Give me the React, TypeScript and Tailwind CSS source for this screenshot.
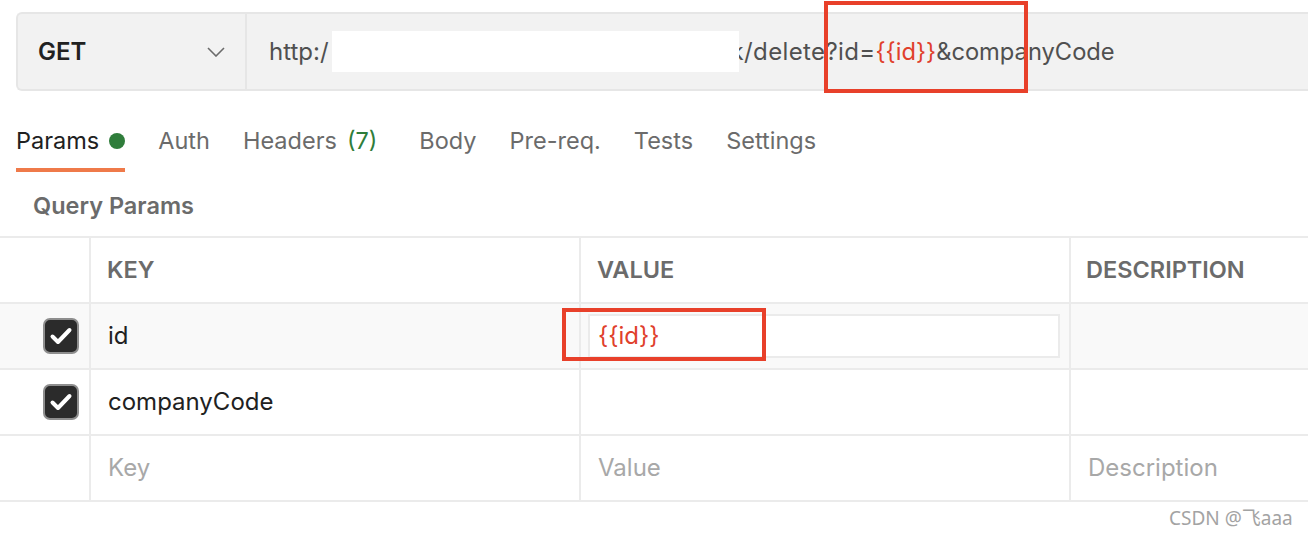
import React from "react";

const font = { fontFamily: "Inter, 'Noto Sans', sans-serif" };

function Checkbox() {
  return (
    <svg width="36" height="36" viewBox="0 0 36 36">
      <rect x="1" y="1" width="34" height="34" rx="6" fill="#2b2b2b" stroke="#8e8e8e" strokeWidth="2" />
      <path d="M9.5 18.5 L15 24 L26.5 12" fill="none" stroke="#ffffff" strokeWidth="4" strokeLinecap="round" strokeLinejoin="round" />
    </svg>
  );
}

const tabs = ["Auth", "Headers", "Body", "Pre-req.", "Tests", "Settings"];

export default function App() {
  return (
    <div className="relative h-[534px] w-[1308px] overflow-hidden bg-white" style={font}>
      {/* request bar */}
      <div className="pl-4 pt-3">
        <div className="flex h-[79px] items-center rounded-l-md border-2 border-r-0 border-[#e6e6e6] bg-[#f2f2f2]">
          <div className="flex h-full w-[229px] items-center justify-between border-r-2 border-[#e6e6e6] pl-[20px] pr-[20px]">
            <span className="text-[24px] font-semibold text-[#212121]">GET</span>
            <svg width="18" height="10" viewBox="0 0 18 10">
              <polyline points="1,1 9,9 17,1" fill="none" stroke="#6b6b6b" strokeWidth="1.6" />
            </svg>
          </div>
          <div className="flex items-center pl-[22px] text-[24px] text-[#505050]">
            <span>http:/</span>
            <span className="relative z-10 ml-[3px] h-[41px] w-[407px] bg-white" />
            <span className="ml-[-8px] tracking-[0.015em]">k/delete?id=</span>
            <span className="text-[23.7px] text-[#e0402c]">{"{{id}}"}</span>
            <span className="text-[23.7px]">&amp;companyCode</span>
          </div>
        </div>
      </div>

      {/* tabs */}
      <div className="flex items-end gap-[33px] pl-4 pt-[35px] text-[23.5px] text-[#6b6b6b]">
        <div className="flex items-center gap-[10px] border-b-4 border-[#ef7a4a] pb-[13px] text-[#212121]">
          <span className="leading-[29px]">Params</span>
          <span className="h-[16px] w-[16px] rounded-full bg-[#2f7d3b]" />
        </div>
        {tabs.map((t) => (
          <div key={t} className="flex items-center gap-[10px] pb-[17px] leading-[29px]">
            <span>{t}</span>
            {t === "Headers" && <span className="pr-[9px] text-[#2f7d3b]">(7)</span>}
          </div>
        ))}
      </div>

      {/* query params label */}
      <div className="flex h-[64px] items-center pl-[33px] pt-[3px] text-[23.5px] font-semibold text-[#6b6b6b]">Query Params</div>

      {/* table */}
      <div className="grid grid-cols-[91px_490px_490px_1fr] border-t-2 border-[#ebebeb] text-[24px]">
        {/* header */}
        <div className="h-[66px] border-b-2 border-r-2 border-[#ebebeb]" />
        <div className="flex h-[66px] items-center border-b-2 border-r-2 border-[#ebebeb] pl-4 text-[23.5px] font-semibold text-[#6b6b6b]">KEY</div>
        <div className="flex h-[66px] items-center border-b-2 border-r-2 border-[#ebebeb] pl-4 text-[23.5px] font-semibold text-[#6b6b6b]">VALUE</div>
        <div className="flex h-[66px] items-center border-b-2 border-[#ebebeb] pl-[15px] text-[23.5px] font-semibold text-[#6b6b6b]">DESCRIPTION</div>

        {/* row 1 */}
        <div className="flex h-[66px] items-center justify-end border-b-2 border-r-2 border-[#ebebeb] bg-[#f9f9f9] pr-[10px]">
          <Checkbox />
        </div>
        <div className="flex h-[66px] items-center border-b-2 border-r-2 border-[#ebebeb] bg-[#f9f9f9] pl-[17px] text-[#212121]">id</div>
        <div className="flex h-[66px] items-center border-b-2 border-r-2 border-[#ebebeb] bg-[#f9f9f9] pl-[7px] pr-[9px]">
          <div className="flex h-[44px] w-full items-center border-2 border-[#ebebeb] bg-white pl-[8px] text-[#e0402c]">{"{{id}}"}</div>
        </div>
        <div className="h-[66px] border-b-2 border-[#ebebeb] bg-[#f9f9f9]" />

        {/* row 2 */}
        <div className="flex h-[66px] items-center justify-end border-b-2 border-r-2 border-[#ebebeb] pr-[10px]">
          <Checkbox />
        </div>
        <div className="flex h-[66px] items-center border-b-2 border-r-2 border-[#ebebeb] pl-[17px] text-[#212121]">companyCode</div>
        <div className="h-[66px] border-b-2 border-r-2 border-[#ebebeb]" />
        <div className="h-[66px] border-b-2 border-[#ebebeb]" />

        {/* row 3 */}
        <div className="h-[66px] border-b-2 border-r-2 border-[#ebebeb]" />
        <div className="flex h-[66px] items-center border-b-2 border-r-2 border-[#ebebeb] pl-[17px] text-[#a8a8a8]">Key</div>
        <div className="flex h-[66px] items-center border-b-2 border-r-2 border-[#ebebeb] pl-[17px] text-[#a8a8a8]">Value</div>
        <div className="flex h-[66px] items-center border-b-2 border-[#ebebeb] pl-[17px] text-[#a8a8a8]">Description</div>
      </div>

      {/* annotations */}
      <div className="absolute left-[824px] top-[1px] h-[92px] w-[204px] border-4 border-[#e8402a]" />
      <div className="absolute left-[562px] top-[308px] h-[53px] w-[204px] border-4 border-[#e8402a]" />

      {/* watermark */}
      <div
        className="absolute left-[1169px] top-[504px] text-[19px] text-[#a3a3a3]"
        style={{ fontFamily: "'Noto Sans', 'Noto Sans CJK SC', sans-serif" }}
      >
        CSDN @飞aaa
      </div>
    </div>
  );
}
